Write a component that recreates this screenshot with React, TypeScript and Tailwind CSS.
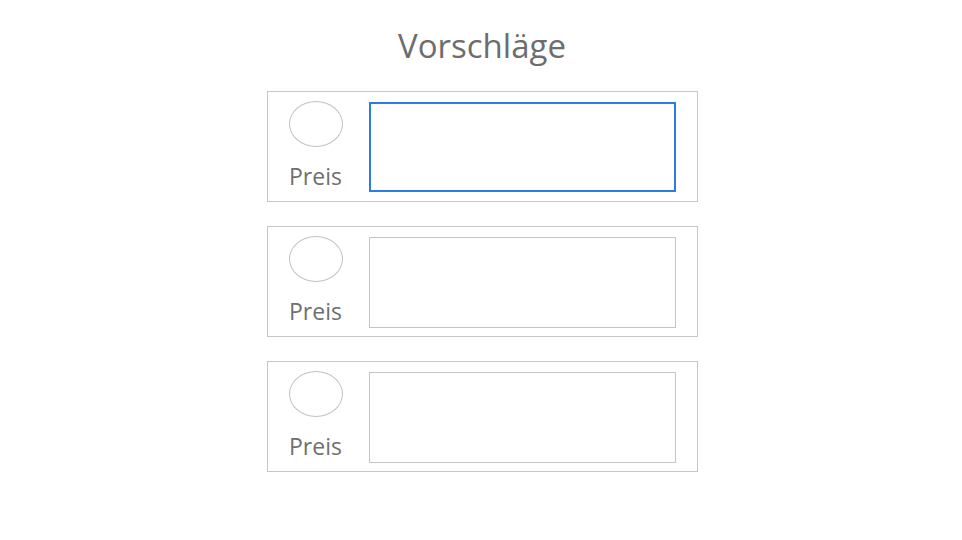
import React from "react";

const rows = [0, 1, 2];

function SuggestionRow({ active }: { active: boolean }) {
  return (
    <div className="flex h-[111px] w-[431px] border border-[#c6c6c6] bg-white pl-[21px] pt-[9px]">
      <div className="flex w-[54px] flex-col items-center">
        <div className="h-[46px] w-[54px] rounded-[50%] border border-[#c2c2c2]" />
        <div className="mt-[14px] text-[23px] leading-[30px] text-[#6f6f6f]">Preis</div>
      </div>
      <div
        className={
          active
            ? "ml-[26px] mt-[1px] h-[90px] w-[307px] border-2 border-[#2b7de1]"
            : "ml-[26px] mt-[1px] h-[91px] w-[307px] border border-[#c4c4c4]"
        }
      />
    </div>
  );
}

export default function App() {
  return (
    <div
      className="flex min-h-[540px] w-full flex-col items-center bg-white pl-[2px] pt-[26px]"
      style={{ fontFamily: '"Open Sans", "Noto Sans", sans-serif' }}
    >
      <h1 className="mb-[25px] text-[33px] leading-[40px] text-[#6d6d6d]">Vorschläge</h1>
      <div className="flex flex-col gap-[24px]">
        {rows.map((i) => (
          <SuggestionRow key={i} active={i === 0} />
        ))}
      </div>
    </div>
  );
}
